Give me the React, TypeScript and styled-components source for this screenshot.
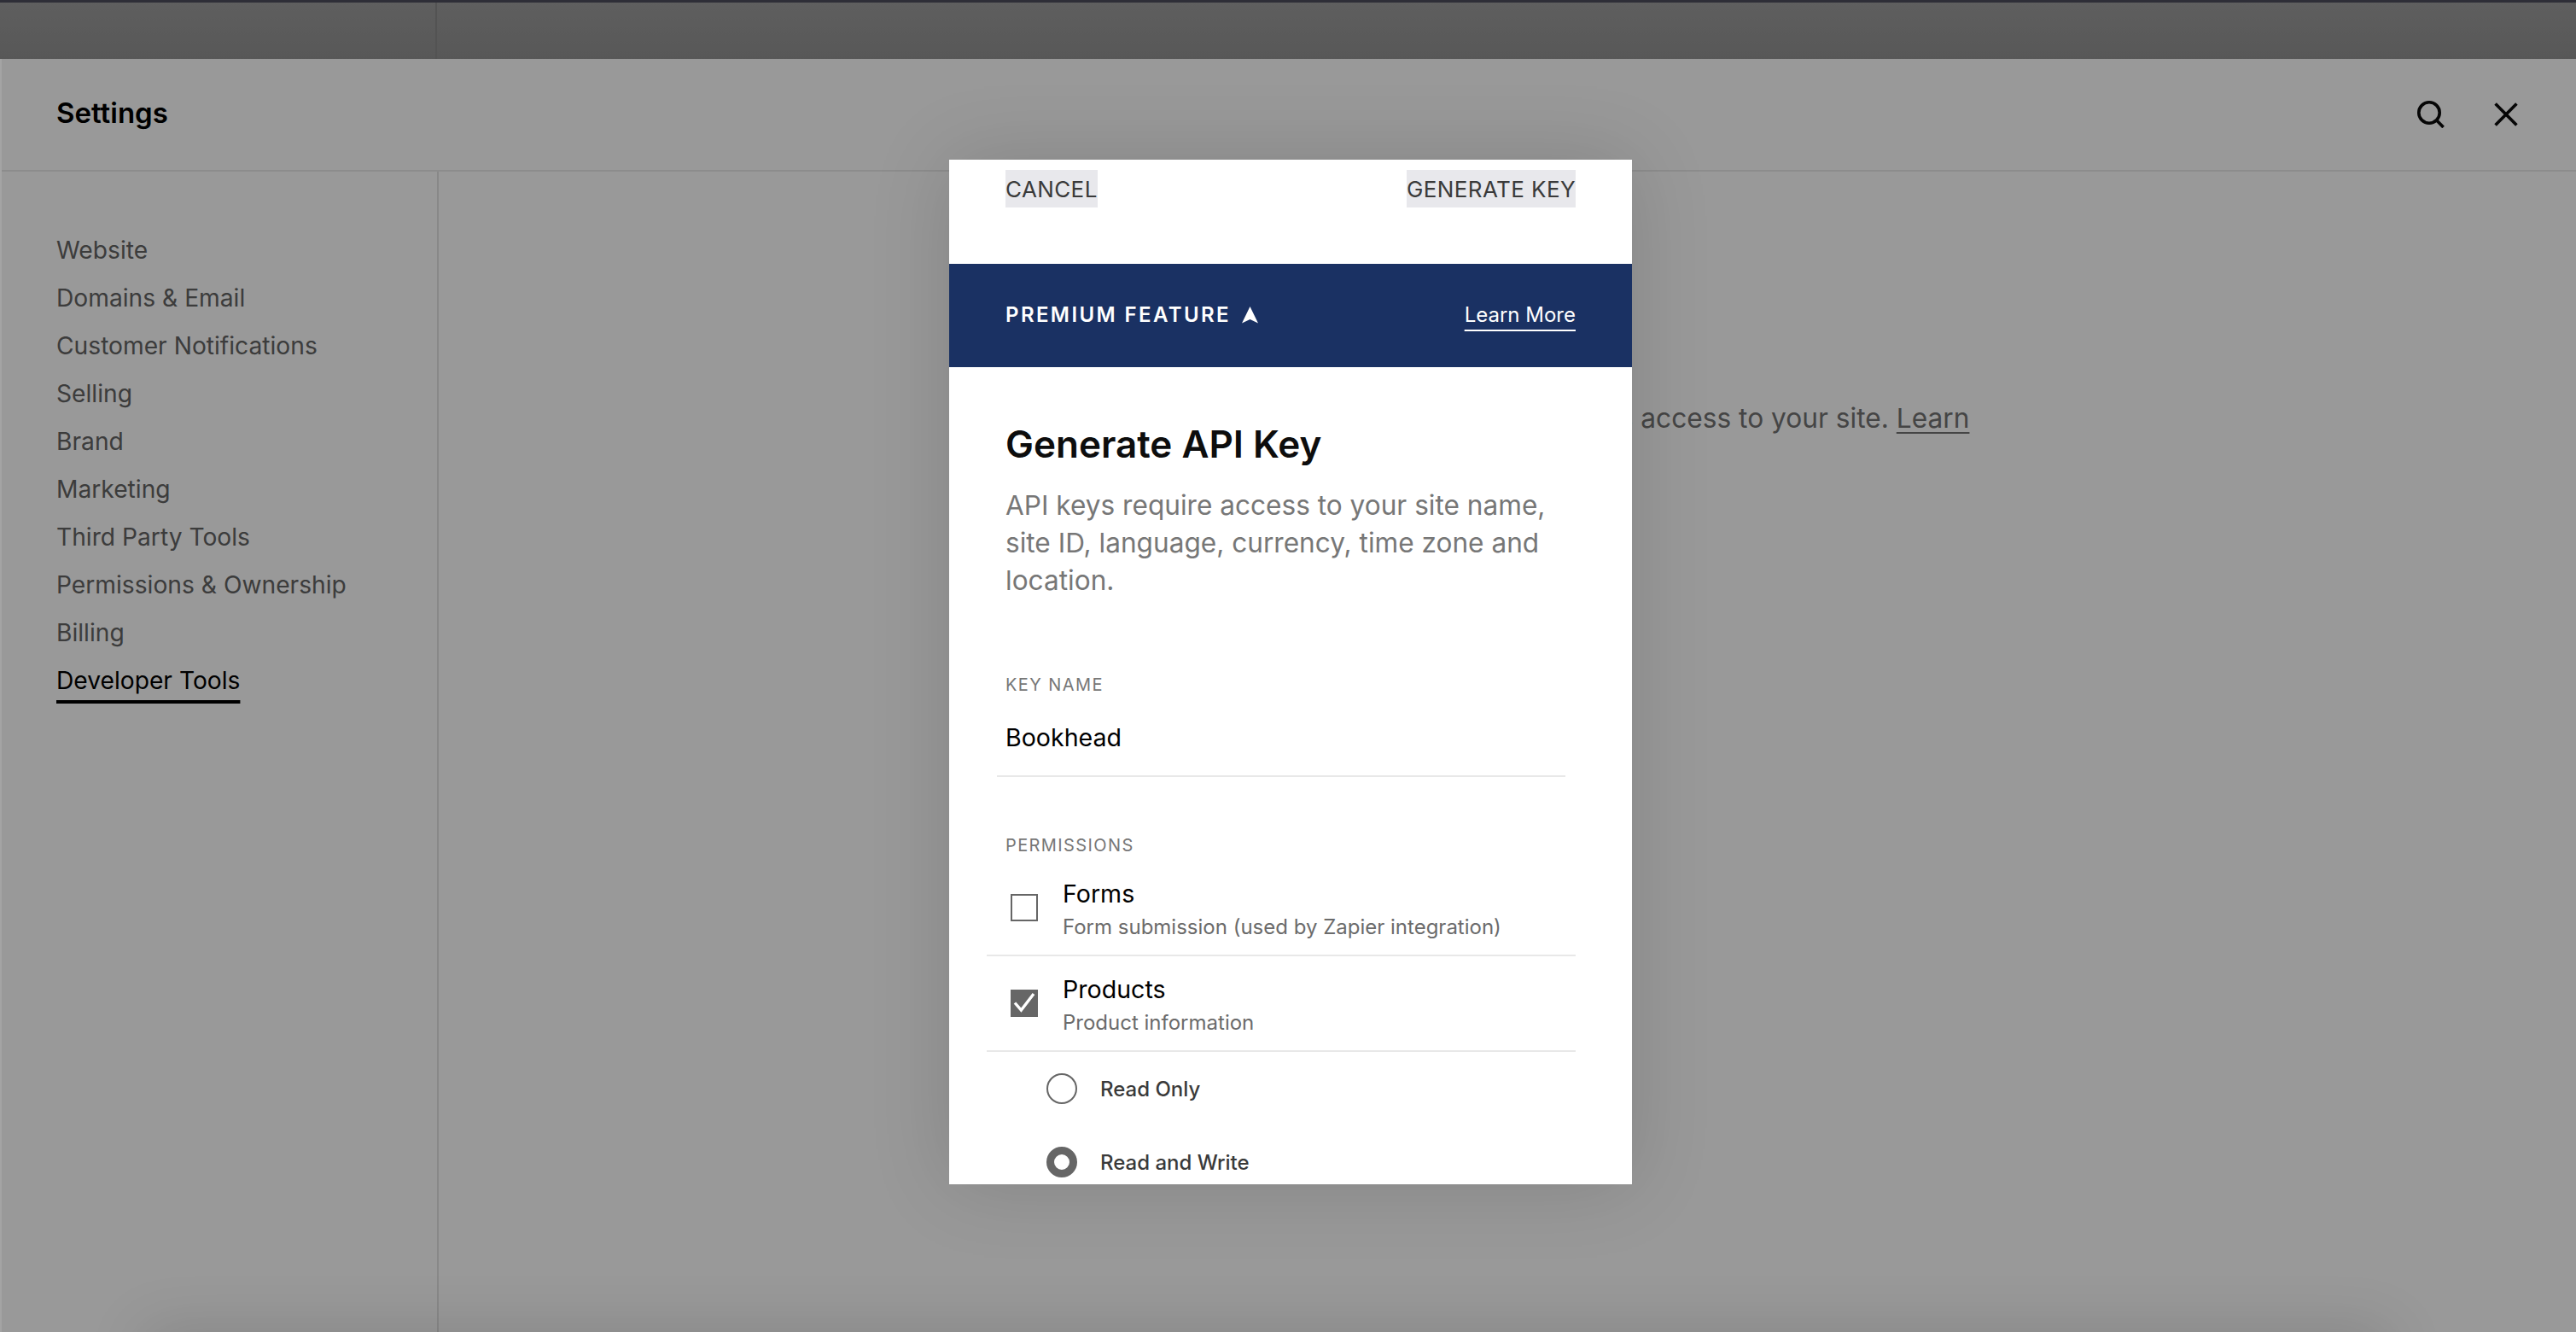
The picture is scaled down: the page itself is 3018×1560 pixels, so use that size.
import styled, { createGlobalStyle } from "styled-components";

const GlobalStyle = createGlobalStyle`
  html, body {
    margin: 0;
    padding: 0;
    background: #fff;
  }
  body {
    font-family: "Inter", "Liberation Sans", sans-serif;
    -webkit-font-smoothing: antialiased;
  }
  * {
    box-sizing: border-box;
  }
`;

const NAV_ITEMS = [
  "Website",
  "Domains & Email",
  "Customer Notifications",
  "Selling",
  "Brand",
  "Marketing",
  "Third Party Tools",
  "Permissions & Ownership",
  "Billing",
  "Developer Tools",
];

const App = () => {
  return (
    <Page>
      <GlobalStyle />
      <TopStrip>
        <TopStripDivider />
      </TopStrip>
      <Panel>
        <PanelHeader>
          <PanelTitle>Settings</PanelTitle>
          <HeaderIcons>
            <svg width="32" height="32" viewBox="0 0 32 32" fill="none" stroke="#0a0a0a" strokeWidth="3.6">
              <circle cx="14" cy="14" r="12.2" />
              <line x1="22.6" y1="22.8" x2="30.6" y2="31" />
            </svg>
            <svg width="28" height="28" viewBox="0 0 28 28" fill="none" stroke="#0a0a0a" strokeWidth="3.6">
              <line x1="1.6" y1="1.6" x2="26.4" y2="26.4" />
              <line x1="26.4" y1="1.6" x2="1.6" y2="26.4" />
            </svg>
          </HeaderIcons>
        </PanelHeader>
        <PanelBody>
          <Sidebar>
            {NAV_ITEMS.map((item) => (
              <NavItem key={item} $active={item === "Developer Tools"}>
                <span>{item}</span>
              </NavItem>
            ))}
          </Sidebar>
          <Main>
            <MainText>
              API keys give external services access to your site. <u>Learn</u>
              <br />
              <u>more</u>
            </MainText>
          </Main>
        </PanelBody>
      </Panel>

      <Overlay>
        <BottomShade />
        <Modal>
          <ModalActions>
            <ActionButton>CANCEL</ActionButton>
            <ActionButton>GENERATE KEY</ActionButton>
          </ModalActions>
          <PremiumBanner>
            <PremiumLabel>
              PREMIUM FEATURE
              <svg width="19" height="20" viewBox="0 0 19 20" fill="#fff">
                <path d="M9.5 0 L19 19.5 L9.5 15 L0 19.5 Z" />
              </svg>
            </PremiumLabel>
            <LearnMore>Learn More</LearnMore>
          </PremiumBanner>
          <ModalBody>
            <ModalTitle>Generate API Key</ModalTitle>
            <ModalDescription>
              API keys require access to your site name,
              <br />
              site ID, language, currency, time zone and
              <br />
              location.
            </ModalDescription>
            <FieldLabel $top={88}>KEY NAME</FieldLabel>
            <KeyInput>Bookhead</KeyInput>
            <FieldLabel $top={68} $bottom={6}>
              PERMISSIONS
            </FieldLabel>
            <PermissionRow>
              <Checkbox />
              <div>
                <PermissionName>Forms</PermissionName>
                <PermissionHint>Form submission (used by Zapier integration)</PermissionHint>
              </div>
            </PermissionRow>
            <PermissionRow>
              <Checkbox $checked>
                <svg width="32" height="32" viewBox="0 0 32 32" fill="none" stroke="#fff" strokeWidth="3.4">
                  <path d="M5 15.5 L12.4 24 L27 5" />
                </svg>
              </Checkbox>
              <div>
                <PermissionName>Products</PermissionName>
                <PermissionHint>Product information</PermissionHint>
              </div>
            </PermissionRow>
            <RadioRow>
              <Radio />
              <RadioLabel>Read Only</RadioLabel>
            </RadioRow>
            <RadioRow>
              <Radio $selected />
              <RadioLabel>Read and Write</RadioLabel>
            </RadioRow>
          </ModalBody>
        </Modal>
      </Overlay>
    </Page>
  );
};

export default App;

const Page = styled.div`
  position: relative;
  width: 3018px;
  height: 1560px;
  overflow: hidden;
  display: flex;
  flex-direction: column;
  background: #fff;
`;

const TopStrip = styled.div`
  height: 69px;
  flex: none;
  border-top: 3px solid #4d4d5d;
  background: linear-gradient(#9e9e9e, #929292);
  display: flex;
`;

const TopStripDivider = styled.div`
  width: 512px;
  border-right: 2px solid #8a8a8a;
`;

const Panel = styled.div`
  flex: 1;
  display: flex;
  flex-direction: column;
  background: #fff;
`;

const PanelHeader = styled.header`
  height: 132px;
  flex: none;
  display: flex;
  align-items: center;
  justify-content: space-between;
  padding: 0 68px 0 66px;
  border-bottom: 2px solid #e9e9e9;
`;

const PanelTitle = styled.h1`
  margin: 0 0 4px;
  font-size: 33px;
  font-weight: 600;
  color: #000;
`;

const HeaderIcons = styled.div`
  display: flex;
  align-items: center;
  gap: 58px;
`;

const PanelBody = styled.div`
  flex: 1;
  display: flex;
`;

const Sidebar = styled.nav`
  width: 514px;
  flex: none;
  padding: 64px 0 0 66px;
  border-right: 2px solid #e3e3e3;
`;

const NavItem = styled.div<{ $active?: boolean }>`
  height: 56px;
  line-height: 56px;
  font-size: 28.2px;
  color: ${(props) => (props.$active ? "#000" : "#646464")};

  span {
    text-decoration: ${(props) => (props.$active ? "underline" : "none")};
    text-decoration-thickness: 4px;
    text-underline-offset: 13px;
    text-decoration-skip-ink: none;
  }
`;

const Main = styled.main`
  flex: 1;
  padding: 267px 0 0 934px;
`;

const MainText = styled.p`
  margin: 0;
  white-space: nowrap;
  font-size: 31.7px;
  line-height: 44px;
  color: #747474;

  u {
    text-underline-offset: 5px;
    text-decoration-thickness: 2px;
  }
`;

const Overlay = styled.div`
  position: absolute;
  inset: 0;
  display: flex;
  justify-content: center;
  padding: 187px 0 0 6px;
  background: rgba(0, 0, 0, 0.4);

  &::before {
    content: "";
    position: absolute;
    left: 0;
    top: 69px;
    bottom: 0;
    width: 2px;
    background: #a4a4a4;
  }
`;

const BottomShade = styled.div`
  position: absolute;
  top: 100%;
  left: 170px;
  right: 220px;
  height: 60px;
  box-shadow: 0 0 70px rgba(0, 0, 0, 0.15);
`;

const Modal = styled.section`
  position: relative;
  width: 800px;
  height: 1200px;
  overflow: hidden;
  background: #fff;
  box-shadow: 0 0 90px rgba(0, 0, 0, 0.14);
`;

const ModalActions = styled.div`
  height: 122px;
  display: flex;
  align-items: flex-start;
  justify-content: space-between;
  padding: 12px 66px 0;
`;

const ActionButton = styled.button`
  height: 44px;
  padding: 0;
  border: none;
  border-radius: 0;
  background: #e8e8ec;
  font-family: inherit;
  font-size: 26px;
  letter-spacing: 0.4px;
  color: #3a3a3a;
`;

const PremiumBanner = styled.div`
  height: 121px;
  display: flex;
  align-items: center;
  justify-content: space-between;
  padding: 0 66px 2px;
  background: #1a3163;
  color: #fff;
`;

const PremiumLabel = styled.div`
  display: flex;
  align-items: center;
  gap: 13px;
  font-size: 24px;
  font-weight: 600;
  letter-spacing: 2.4px;
`;

const LearnMore = styled.a`
  font-size: 24px;
  text-decoration: underline;
  text-decoration-thickness: 2px;
  text-underline-offset: 9px;
  text-decoration-skip-ink: none;
`;

const ModalBody = styled.div`
  padding: 65px 66px 0;
`;

const ModalTitle = styled.h2`
  margin: 0;
  font-size: 44px;
  line-height: 50px;
  font-weight: 600;
  color: #0d0d0d;
`;

const ModalDescription = styled.p`
  margin: 25px 0 0;
  font-size: 31.6px;
  line-height: 44px;
  color: #777;
  white-space: nowrap;
`;

const FieldLabel = styled.div<{ $top: number; $bottom?: number }>`
  margin-top: ${(props) => props.$top}px;
  margin-bottom: ${(props) => props.$bottom ?? 0}px;
  font-size: 20px;
  line-height: 24px;
  letter-spacing: 1.4px;
  color: #777;
`;

const KeyInput = styled.div`
  margin: 30px 12px 0 -10px;
  padding: 0 0 24px 10px;
  border-bottom: 2px solid #e8e8e8;
  font-size: 28.6px;
  line-height: 40px;
  color: #000;
`;

const PermissionRow = styled.div`
  display: flex;
  align-items: flex-start;
  gap: 29px;
  margin-left: -22px;
  padding: 19px 0 15px 28px;
  border-bottom: 2px solid #e8e8e8;
`;

const Checkbox = styled.div<{ $checked?: boolean }>`
  width: 32px;
  height: 32px;
  flex: none;
  margin-top: 20px;
  border: ${(props) => (props.$checked ? "none" : "2px solid #666")};
  background: ${(props) => (props.$checked ? "#666" : "#fff")};

  svg {
    display: block;
  }
`;

const PermissionName = styled.div`
  margin-bottom: 2px;
  font-size: 28.6px;
  line-height: 40px;
  color: #000;
`;

const PermissionHint = styled.div`
  font-size: 24px;
  line-height: 34px;
  color: #6b6b6b;
`;

const RadioRow = styled.div`
  height: 86px;
  display: flex;
  align-items: center;
  gap: 27px;
  padding-left: 48px;
`;

const Radio = styled.div<{ $selected?: boolean }>`
  width: 36px;
  height: 36px;
  flex: none;
  border-radius: 50%;
  border: ${(props) => (props.$selected ? "9px" : "2px")} solid #666;
  background: #fff;
`;

const RadioLabel = styled.div`
  font-size: 24px;
  font-weight: 500;
  color: #3a3a3a;
`;
